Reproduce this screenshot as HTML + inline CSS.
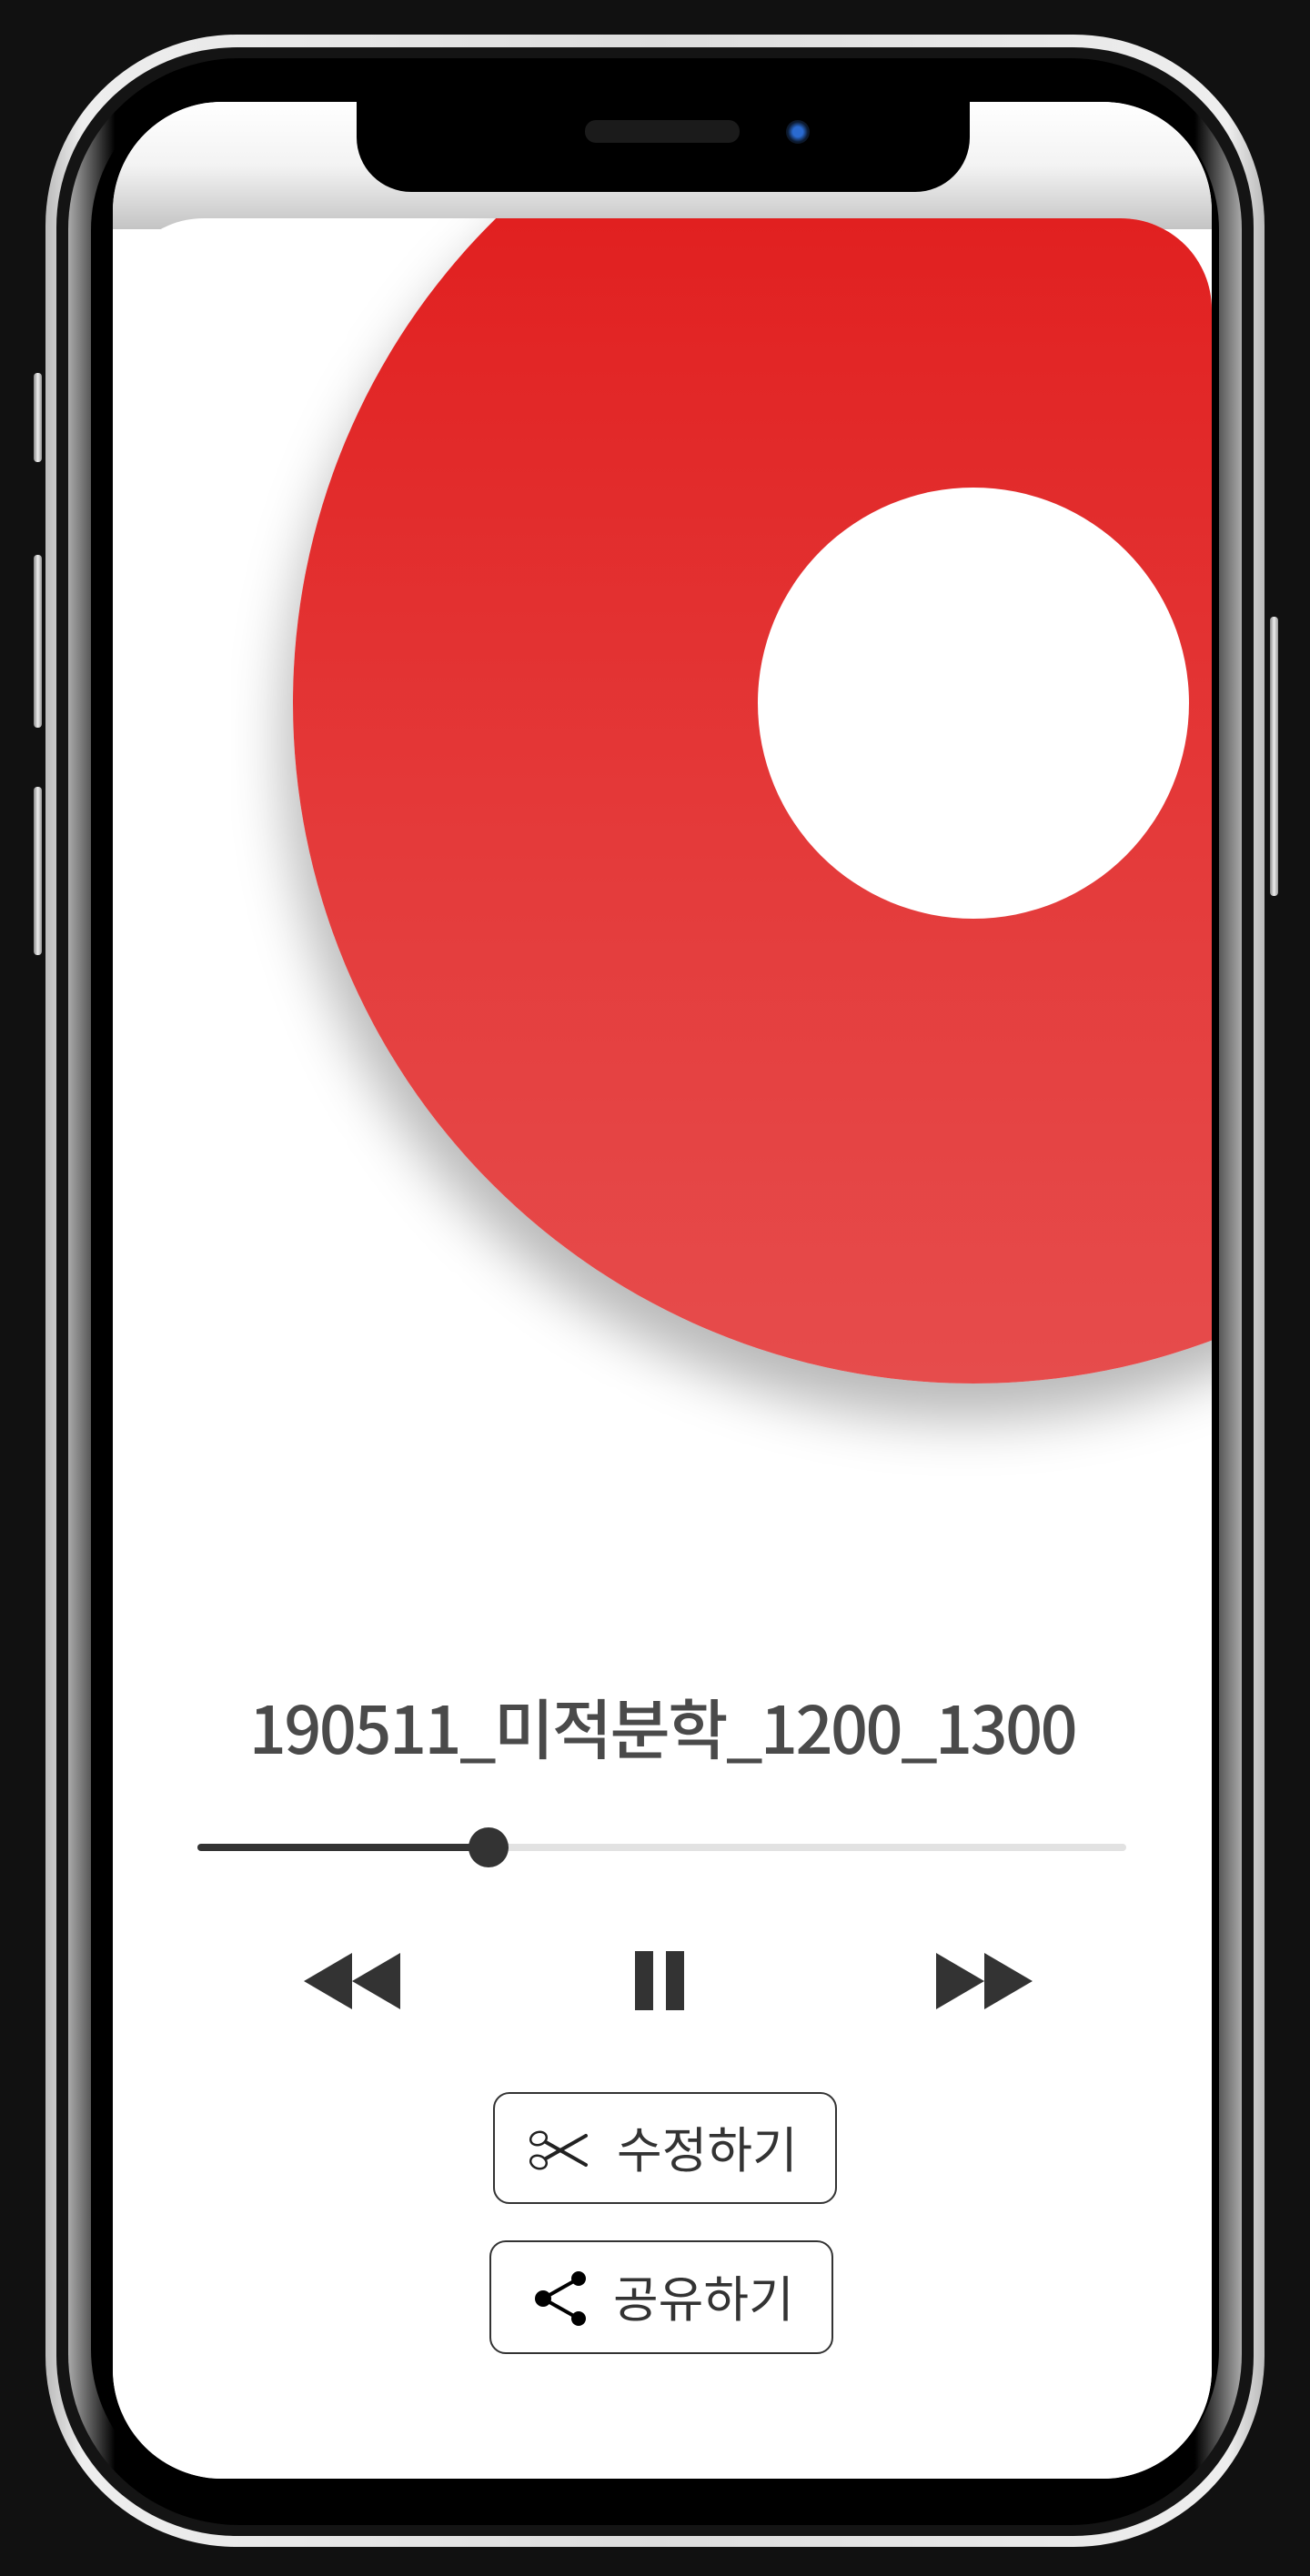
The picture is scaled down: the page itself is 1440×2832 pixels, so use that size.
<!DOCTYPE html>
<html><head><meta charset="utf-8"><style>
*{margin:0;padding:0;box-sizing:border-box}
html,body{width:1440px;height:2832px;background:#111;overflow:hidden;position:relative;font-family:"Liberation Sans","Noto Sans CJK KR",sans-serif}
.abs{position:absolute}
.btn{position:absolute;left:37px;width:9px;background:linear-gradient(90deg,#888,#eee,#999);border-radius:4px}
</style></head><body>
<div class="btn" style="top:410px;height:98px"></div>
<div class="btn" style="top:610px;height:190px"></div>
<div class="btn" style="top:865px;height:185px"></div>
<div class="btn" style="left:1396px;top:678px;height:307px"></div>
<div class="abs" style="left:50px;top:38px;width:1340px;height:2762px;border-radius:210px;background:linear-gradient(90deg,#bbb,#eee 3%,#ddd 50%,#eee 97%,#bbb);"></div>
<div class="abs" style="left:62px;top:52px;width:1316px;height:2736px;border-radius:198px;background:#141414"></div>
<div class="abs" style="left:75px;top:64px;width:1290px;height:2712px;border-radius:188px;background:linear-gradient(90deg,#aaa,#555 2%,#000 4%,#000 96%,#555 98%,#aaa);"></div>
<div class="abs" style="left:100px;top:88px;width:1240px;height:2660px;border-radius:165px;background:#000"></div>
<div class="abs" style="left:124px;top:112px;width:1208px;height:2613px;border-radius:120px;background:#fff;overflow:hidden">
  <div class="abs" style="left:0;top:0;width:1208px;height:140px;background:linear-gradient(180deg,#fff 0%,#f3f3f3 50%,#c4c4c4 100%)"></div>
  <div class="abs" style="left:0;top:128px;width:1208px;height:2485px;background:#fff;border-radius:100px 100px 0 0;overflow:hidden">
    <div class="abs" style="left:198px;top:-215px;width:1496px;height:1496px;border-radius:50%;background:linear-gradient(180deg,#e01818 0%,#e43a3a 60%,#e64c4c 100%);box-shadow:-10px 40px 60px rgba(0,0,0,.28)"></div>
    <div class="abs" style="left:709px;top:296px;width:474px;height:474px;border-radius:50%;background:#fff"></div>
  </div>
  <div class="abs" style="left:268px;top:0;width:674px;height:99px;background:#000;border-radius:0 0 60px 60px"></div>
  <div class="abs" style="left:519px;top:20px;width:170px;height:25px;border-radius:12px;background:#1b1b1b"></div>
  <div class="abs" style="left:740px;top:20px;width:26px;height:26px;border-radius:50%;background:radial-gradient(circle,#2a6ad0 0 30%,#0c1a30 60%,#111 100%)"></div>
</div>
<div class="abs" style="left:0;top:1853px;width:1456px;text-align:center;font-family:'Noto Sans CJK KR','Liberation Sans',sans-serif;font-weight:500;font-size:72px;line-height:88px;color:#4a4a4a;letter-spacing:-2.5px">190511_미적분학_1200_1300</div>
<div class="abs" style="left:217px;top:2027px;width:1021px;height:8px;border-radius:4px;background:#e2e2e2"></div>
<div class="abs" style="left:217px;top:2027px;width:320px;height:8px;border-radius:4px;background:#333"></div>
<div class="abs" style="left:515px;top:2009px;width:44px;height:44px;border-radius:50%;background:#333"></div>
<svg class="abs" style="left:334px;top:2147px" width="106" height="62" viewBox="0 0 106 62"><path d="M0 31 L53 0 V62 Z M53 31 L106 0 V62 Z" fill="#333"/></svg>
<div class="abs" style="left:698px;top:2145px;width:20px;height:65px;background:#333"></div>
<div class="abs" style="left:732px;top:2145px;width:20px;height:65px;background:#333"></div>
<svg class="abs" style="left:1029px;top:2147px" width="106" height="62" viewBox="0 0 106 62"><path d="M0 0 L53 31 L0 62 Z M53 0 L106 31 L53 62 Z" fill="#333"/></svg>
<div class="abs" style="left:542px;top:2300px;width:378px;height:123px;border:2px solid #333;border-radius:18px"></div>
<svg class="abs" style="left:580px;top:2340px" width="68" height="48" viewBox="0 0 68 48"><ellipse cx="12" cy="11" rx="9" ry="7" fill="none" stroke="#222" stroke-width="2.5" transform="rotate(-20 12 11)"/><ellipse cx="12" cy="37" rx="9" ry="7" fill="none" stroke="#222" stroke-width="2.5" transform="rotate(20 12 37)"/><path d="M20 15 L64 40 M20 33 L64 8" stroke="#222" stroke-width="4" stroke-linecap="round"/></svg>
<div class="abs" style="left:678px;top:2328px;font-family:'Noto Sans CJK KR',sans-serif;font-size:54px;line-height:64px;color:#333">수정하기</div>
<div class="abs" style="left:538px;top:2463px;width:378px;height:125px;border:2px solid #333;border-radius:18px"></div>
<svg class="abs" style="left:585px;top:2495px" width="62" height="64" viewBox="0 0 62 64"><path d="M12 32 L51 10 M12 32 L51 54" stroke="#000" stroke-width="4"/><circle cx="12" cy="32" r="9" fill="#000"/><circle cx="51" cy="10" r="8" fill="#000"/><circle cx="51" cy="54" r="8" fill="#000"/></svg>
<div class="abs" style="left:674px;top:2492px;font-family:'Noto Sans CJK KR',sans-serif;font-size:54px;line-height:64px;color:#333">공유하기</div>
</body></html>
